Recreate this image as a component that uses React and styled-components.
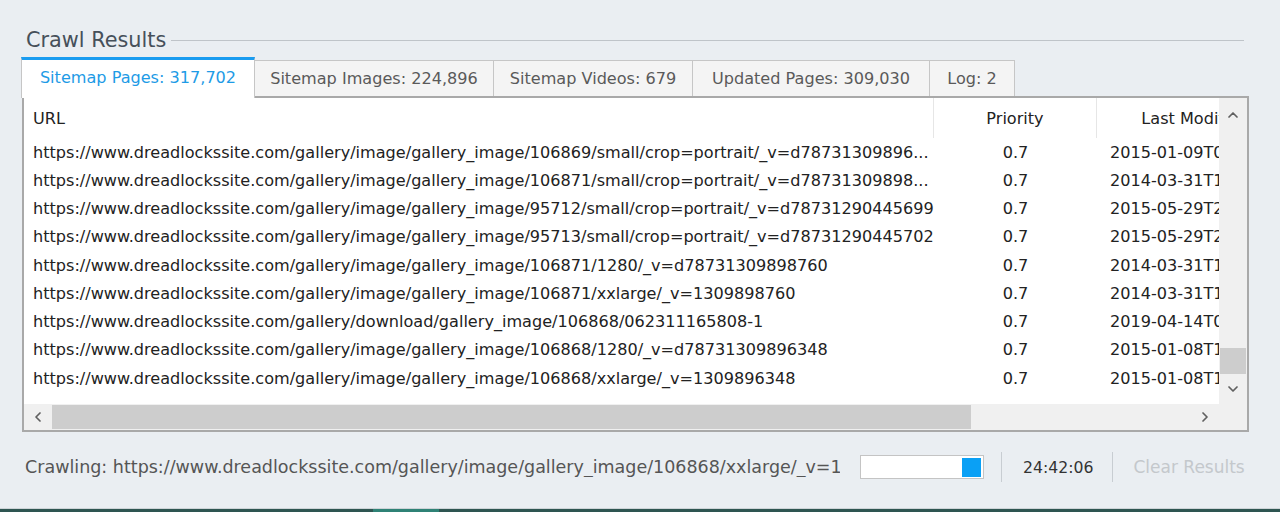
import React from 'react';
import styled, { createGlobalStyle } from 'styled-components';
import { ChevronUp, ChevronDown, ChevronLeft, ChevronRight } from 'lucide-react';

const GlobalStyle = createGlobalStyle`
  html, body {
    margin: 0;
    padding: 0;
    background: #eaeef2;
  }
  * {
    box-sizing: border-box;
  }
`;

const Page = styled.div`
  width: 1280px;
  height: 512px;
  display: flex;
  flex-direction: column;
  overflow: hidden;
  padding-top: 26px;
  font-family: 'DejaVu Sans', 'Open Sans', sans-serif;
  font-size: 16.1px;
  color: #222;
`;

const GroupHeader = styled.div`
  display: flex;
  align-items: center;
  height: 28px;
  margin-left: 26px;
  width: 1218px;
`;

const GroupTitle = styled.div`
  font-size: 20.8px;
  color: #46505a;
  white-space: nowrap;
`;

const GroupLine = styled.div`
  flex: 1;
  height: 1px;
  background: #bfc4c9;
  margin-left: 5px;
`;

const TabRow = styled.div`
  display: flex;
  align-items: flex-end;
  height: 39px;
  margin-top: 3px;
  margin-left: 21px;
`;

const Tab = styled.div`
  position: relative;
  width: ${(p) => p.$w}px;
  height: ${(p) => (p.$active ? 41 : 36)}px;
  margin-bottom: ${(p) => (p.$active ? -2 : 0)}px;
  z-index: ${(p) => (p.$active ? 2 : 1)};
  display: flex;
  align-items: center;
  justify-content: center;
  padding-bottom: ${(p) => (p.$active ? 4 : 1)}px;
  background: ${(p) => (p.$active ? '#ffffff' : '#f4f4f4')};
  border: 1px solid #c6c6c6;
  border-left-width: ${(p) => (p.$first ? 1 : 0)}px;
  border-bottom: none;
  border-top: ${(p) => (p.$active ? '3px solid #1a9cf0' : '1px solid #c6c6c6')};
  color: ${(p) => (p.$active ? '#1e9be6' : '#5a5a5a')};
  white-space: nowrap;
`;

const Panel = styled.div`
  margin-left: 22px;
  width: 1227px;
  height: 336px;
  border: 2px solid #a9a9a9;
  background: #ffffff;
  display: grid;
  grid-template-columns: 1fr 28px;
  grid-template-rows: 1fr 26px;
`;

const Viewport = styled.div`
  overflow: hidden;
  background: #ffffff;
`;

const Grid = styled.div`
  display: grid;
  grid-template-columns: 910px 163px 196px;
  grid-template-rows: 40px;
  grid-auto-rows: 28.25px;
  width: 1269px;
`;

const HeadCell = styled.div`
  display: flex;
  align-items: center;
  justify-content: ${(p) => p.$align || 'flex-start'};
  padding-left: ${(p) => p.$pad || 0}px;
  border-right: ${(p) => (p.$divider ? '1px solid #e6e6e6' : 'none')};
  color: #222;
  white-space: nowrap;
  overflow: hidden;
`;

const Cell = styled.div`
  display: flex;
  align-items: center;
  justify-content: ${(p) => p.$align || 'flex-start'};
  padding-left: ${(p) => p.$pad || 0}px;
  white-space: nowrap;
  overflow: hidden;
  color: #222;
`;

const VScroll = styled.div`
  background: #f0f0f0;
  display: flex;
  flex-direction: column;
`;

const ArrowBox = styled.div`
  height: ${(p) => p.$h || 28}px;
  width: ${(p) => p.$w || 28}px;
  flex-shrink: 0;
  display: flex;
  align-items: center;
  justify-content: center;
  color: #606060;
`;

const VTrack = styled.div`
  flex: 1;
  display: flex;
  flex-direction: column;
  justify-content: flex-end;
`;

const VThumb = styled.div`
  height: 26px;
  margin: 0 1px;
  background: #cdcdcd;
`;

const HScroll = styled.div`
  background: #f0f0f0;
  display: flex;
  align-items: stretch;
`;

const HTrack = styled.div`
  flex: 1;
  display: flex;
  align-items: stretch;
  padding: 1px 0;
`;

const HThumb = styled.div`
  width: 919px;
  background: #cdcdcd;
`;

const Corner = styled.div`
  background: #f0f0f0;
`;

const StatusRow = styled.div`
  display: flex;
  align-items: center;
  height: 30px;
  margin-top: 20px;
  margin-left: 25px;
  font-size: 17px;
`;

const StatusText = styled.div`
  width: 815px;
  overflow: hidden;
  white-space: nowrap;
  font-size: 17.5px;
  color: #555;
`;

const Progress = styled.div`
  margin-left: 20px;
  width: 124px;
  height: 24px;
  border: 1px solid #c4c4c4;
  background: #fff;
  display: flex;
  justify-content: flex-end;
  align-items: center;
  padding-right: 2px;
`;

const ProgressFill = styled.div`
  width: 19px;
  height: 19px;
  background: #0aa0f5;
`;

const Separator = styled.div`
  width: 1px;
  height: 30px;
  background: #c8cdd2;
  margin-left: ${(p) => p.$ml}px;
`;

const Time = styled.div`
  margin-left: 21px;
  font-size: 15.7px;
  color: #333;
  white-space: nowrap;
`;

const ClearButton = styled.div`
  margin-left: 20px;
  color: #c4c8cc;
  white-space: nowrap;
`;

const Spacer = styled.div`
  flex: 1;
`;

const Taskbar = styled.div`
  height: 4px;
  border-top: 1px solid #cdd3d7;
  background: #2e5551;
  display: flex;
`;

const TaskItem = styled.div`
  margin-left: 373px;
  width: 66px;
  background: #2f8276;
`;

const rows = [
  ['https://www.dreadlockssite.com/gallery/image/gallery_image/106869/small/crop=portrait/_v=d78731309896...', '2015-01-09T09:12:44'],
  ['https://www.dreadlockssite.com/gallery/image/gallery_image/106871/small/crop=portrait/_v=d78731309898...', '2014-03-31T11:05:02'],
  ['https://www.dreadlockssite.com/gallery/image/gallery_image/95712/small/crop=portrait/_v=d78731290445699', '2015-05-29T22:40:15'],
  ['https://www.dreadlockssite.com/gallery/image/gallery_image/95713/small/crop=portrait/_v=d78731290445702', '2015-05-29T22:40:15'],
  ['https://www.dreadlockssite.com/gallery/image/gallery_image/106871/1280/_v=d78731309898760', '2014-03-31T11:05:02'],
  ['https://www.dreadlockssite.com/gallery/image/gallery_image/106871/xxlarge/_v=1309898760', '2014-03-31T11:05:02'],
  ['https://www.dreadlockssite.com/gallery/download/gallery_image/106868/062311165808-1', '2019-04-14T06:21:33'],
  ['https://www.dreadlockssite.com/gallery/image/gallery_image/106868/1280/_v=d78731309896348', '2015-01-08T11:48:20'],
  ['https://www.dreadlockssite.com/gallery/image/gallery_image/106868/xxlarge/_v=1309896348', '2015-01-08T11:48:20'],
];

const tabs = [
  { label: 'Sitemap Pages: 317,702', w: 234, active: true },
  { label: 'Sitemap Images: 224,896', w: 239 },
  { label: 'Sitemap Videos: 679', w: 199 },
  { label: 'Updated Pages: 309,030', w: 237 },
  { label: 'Log: 2', w: 85 },
];

export default function App() {
  return (
    <Page>
      <GlobalStyle />
      <GroupHeader>
        <GroupTitle>Crawl Results</GroupTitle>
        <GroupLine />
      </GroupHeader>
      <TabRow>
        {tabs.map((t, i) => (
          <Tab key={t.label} $w={t.w} $active={t.active} $first={i === 0}>
            {t.label}
          </Tab>
        ))}
      </TabRow>
      <Panel>
        <Viewport>
          <Grid>
            <HeadCell $pad={9} $divider>URL</HeadCell>
            <HeadCell $align="center" $divider>Priority</HeadCell>
            <HeadCell $align="center">Last Modified</HeadCell>
            {rows.map(([url, date]) => (
              <React.Fragment key={url}>
                <Cell $pad={9}>{url}</Cell>
                <Cell $align="center">0.7</Cell>
                <Cell $pad={13}>{date}</Cell>
              </React.Fragment>
            ))}
          </Grid>
        </Viewport>
        <VScroll>
          <ArrowBox $h={34}>
            <ChevronUp size={16} strokeWidth={2.6} />
          </ArrowBox>
          <VTrack>
            <VThumb />
          </VTrack>
          <ArrowBox $h={30}>
            <ChevronDown size={16} strokeWidth={2.6} />
          </ArrowBox>
        </VScroll>
        <HScroll>
          <ArrowBox $h={26}>
            <ChevronLeft size={16} strokeWidth={2.6} />
          </ArrowBox>
          <HTrack>
            <HThumb />
          </HTrack>
          <ArrowBox $h={26}>
            <ChevronRight size={16} strokeWidth={2.6} />
          </ArrowBox>
        </HScroll>
        <Corner />
      </Panel>
      <StatusRow>
        <StatusText>
          Crawling: https://www.dreadlockssite.com/gallery/image/gallery_image/106868/xxlarge/_v=1309896348
        </StatusText>
        <Progress>
          <ProgressFill />
        </Progress>
        <Separator $ml={17} />
        <Time>24:42:06</Time>
        <Separator $ml={19} />
        <ClearButton>Clear Results</ClearButton>
      </StatusRow>
      <Spacer />
      <Taskbar>
        <TaskItem />
      </Taskbar>
    </Page>
  );
}
